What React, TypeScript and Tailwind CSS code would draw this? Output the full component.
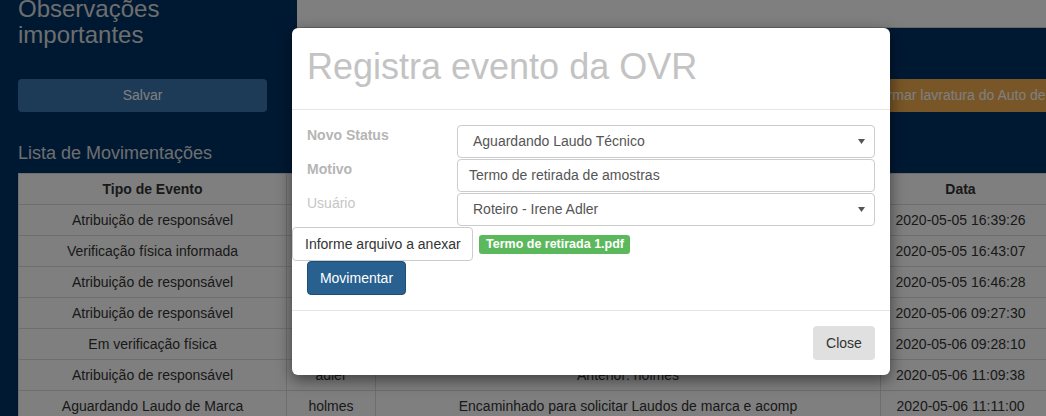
const rows = [
    ['Atribuição de responsável', 'holmes', 'Anterior: ', '2020-05-05 16:39:26'],
    ['Verificação física informada', 'holmes', 'Verificação física concluída', '2020-05-05 16:43:07'],
    ['Atribuição de responsável', 'holmes', 'Anterior: holmes', '2020-05-05 16:46:28'],
    ['Atribuição de responsável', 'adler', 'Anterior: holmes', '2020-05-06 09:27:30'],
    ['Em verificação física', 'adler', 'Iniciada verificação física', '2020-05-06 09:28:10'],
    ['Atribuição de responsável', 'adler', 'Anterior: holmes', '2020-05-06 11:09:38'],
    ['Aguardando Laudo de Marca', 'holmes', 'Encaminhado para solicitar Laudos de marca e acomp', '2020-05-06 11:11:00'],
];

function Select({ value }: { value: string }) {
    return (
        <div className="flex h-[33px] items-center justify-between rounded-[4px] border border-[#ccc] bg-white pr-[9px] pl-[15px] text-[14px] text-[#555]">
            <span>{value}</span>
            <svg width="7" height="5" viewBox="0 0 7 5">
                <path d="M0 0h7L3.5 5z" fill="#555" />
            </svg>
        </div>
    );
}

export default function App() {
    return (
        <div className="relative h-[416px] w-[1046px] overflow-hidden bg-[#003366] font-['Liberation_Sans',Arial,sans-serif] text-[14px] text-[#333]">
            <div className="flex">
                <div className="w-[297px] shrink-0 px-[18px]">
                    <h3 className="-mt-[4px] text-[24px] leading-[26px] text-[#dcdcdc]">
                        Observações
                        <br />
                        importantes
                    </h3>
                    <button className="mt-[31px] h-[33px] w-[249px] rounded-[4px] bg-[#3a74ae] text-white">
                        Salvar
                    </button>
                </div>
                <div className="min-w-0 flex-1">
                    <div className="h-[28px] border-b border-[#ccc] bg-white" />
                    <button className="mt-[51px] ml-[546px] h-[33px] whitespace-nowrap rounded-[4px] bg-[#f0ad4e] px-[12px] text-white">
                        Confirmar lavratura do Auto de Infração
                    </button>
                </div>
            </div>

            <h4 className="mt-[31px] px-[18px] text-[18px] leading-[20px] text-[#dcdcdc]">
                Lista de Movimentações
            </h4>

            <table className="mt-[10px] ml-[18px] w-[1050px] table-fixed border-collapse bg-white">
                <colgroup>
                    <col className="w-[268px]" />
                    <col className="w-[89px]" />
                    <col className="w-[505px]" />
                    <col className="w-[188px]" />
                </colgroup>
                <thead>
                    <tr className="h-[31px]">
                        <th className="border border-[#ddd] text-center font-bold">Tipo de Evento</th>
                        <th className="border border-[#ddd] text-center font-bold">Usuário</th>
                        <th className="border border-[#ddd] text-center font-bold">Motivo</th>
                        <th className="border border-[#ddd] pr-[28px] text-center font-bold">Data</th>
                    </tr>
                </thead>
                <tbody>
                    {rows.map((r, i) => (
                        <tr key={i} className="h-[31px]">
                            <td className="border border-[#ddd] text-center">{r[0]}</td>
                            <td className="border border-[#ddd] text-center">{r[1]}</td>
                            <td className="overflow-hidden whitespace-nowrap border border-[#ddd] text-center">{r[2]}</td>
                            <td className="border border-[#ddd] pr-[28px] text-center">{r[3]}</td>
                        </tr>
                    ))}
                </tbody>
            </table>

            <div className="absolute inset-0 bg-black/50" />

            <div className="absolute top-[28px] left-[292px] w-[598px] rounded-[6px] bg-white shadow-[0_5px_15px_rgba(0,0,0,0.5)]">
                <div className="flex h-[82px] items-center border-b border-[#e5e5e5] px-[15px] pb-[4px]">
                    <h1 className="text-[36px] leading-[42px] text-[#c3c3c3]">Registra evento da OVR</h1>
                </div>
                <div className="px-[15px] pt-[15px] pb-[15px]">
                    <div className="flex flex-col gap-[1px]">
                        <div className="flex">
                            <label className="w-[150px] leading-[20px] font-bold text-[#b5b5b5]">Novo Status</label>
                            <div className="flex-1">
                                <Select value="Aguardando Laudo Técnico" />
                            </div>
                        </div>
                        <div className="flex">
                            <label className="w-[150px] leading-[20px] font-bold text-[#b5b5b5]">Motivo</label>
                            <div className="flex h-[33px] flex-1 items-center rounded-[4px] border border-[#ccc] px-[11px] text-[#555]">
                                Termo de retirada de amostras
                            </div>
                        </div>
                        <div className="flex">
                            <label className="w-[150px] leading-[20px] text-[#c6c6c6]">Usuário</label>
                            <div className="flex-1">
                                <Select value="Roteiro - Irene Adler" />
                            </div>
                        </div>
                    </div>
                    <div className="mt-[1px] -ml-[15px] flex items-center gap-[6px]">
                        <div className="flex h-[34px] w-[181px] items-center whitespace-nowrap rounded-[4px] border border-[#ccc] px-[12px] text-[#333]">
                            Informe arquivo a anexar
                        </div>
                        <span className="flex h-[19px] items-center rounded-[3px] bg-[#5cb85c] pr-[6px] pl-[7px] text-[12.5px] font-bold text-white">
                            Termo de retirada 1.pdf
                        </span>
                    </div>
                    <button className="h-[34px] w-[99px] rounded-[4px] border border-[#204d74] bg-[#286090] text-white">
                        Movimentar
                    </button>
                </div>
                <div className="flex justify-end border-t border-[#e5e5e5] p-[15px]">
                    <button className="h-[34px] w-[62px] rounded-[4px] bg-[#e0e0e0] text-[#333]">Close</button>
                </div>
            </div>
        </div>
    );
}
